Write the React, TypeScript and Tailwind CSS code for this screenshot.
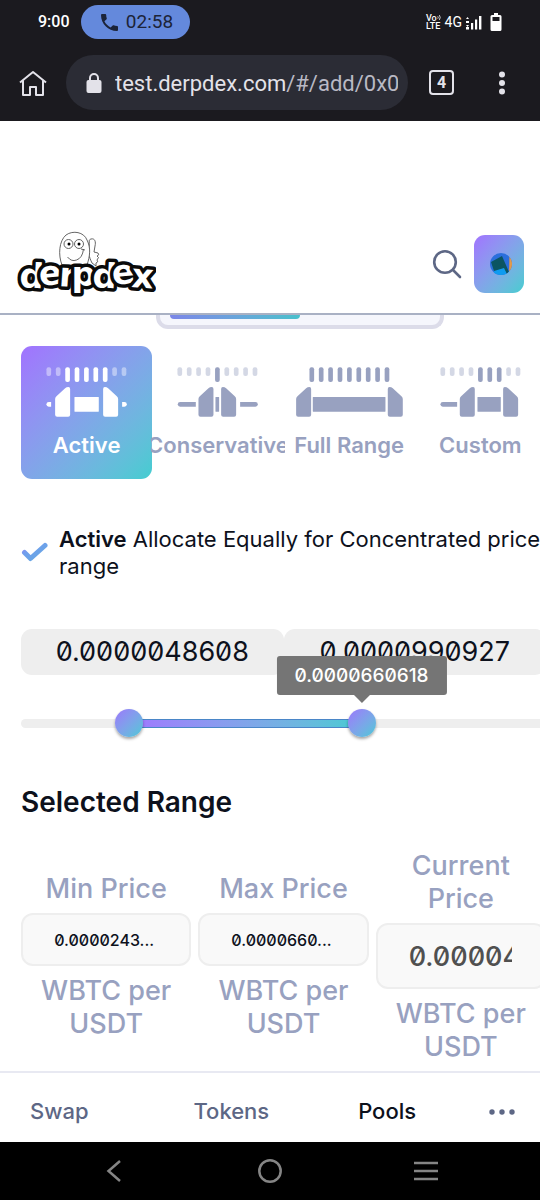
import { useState } from 'react';

type RangeIconProps = {
  tall: number[];
  left: number;
  right: number;
  leftBar?: [number, number];
  rightBar?: [number, number];
  fillBar: [number, number];
};

function RangeIcon({ tall, left, right, leftBar, rightBar, fillBar }: RangeIconProps) {
  return (
    <svg viewBox="0 0 393 150" className="w-full h-[50px]" fill="currentColor" aria-hidden="true">
      {[0, 1, 2, 3, 4, 5, 6, 7, 8].map((i) => {
        const isTall = tall.includes(i);
        return (
          <rect
            key={i}
            x={76 + i * 28.2}
            y={1}
            width={14}
            height={isTall ? 44 : 26}
            rx={6}
            opacity={isTall ? 1 : 0.42}
          />
        );
      })}
      {leftBar && (
        <path d={`M${leftBar[1]} 105H${leftBar[0] + 7}a7 7 0 0 0 0 14H${leftBar[1]}z`} />
      )}
      {rightBar && (
        <path d={`M${rightBar[0]} 105H${rightBar[1] - 7}a7 7 0 0 1 0 14H${rightBar[0]}z`} />
      )}
      <rect x={fillBar[0]} y={90} width={fillBar[1] - fillBar[0]} height={44} rx={1} />
      <path d={`M${left} 96q0-5 4-8l26-24q4-4 10-4q5 0 5 6v77q0 6-6 6h-33q-6 0-6-6z`} />
      <path d={`M${right} 96q0-5-4-8l-26-24q-4-4-10-4q-5 0-5 6v77q0 6 6 6h33q6 0 6-6z`} />
    </svg>
  );
}

const presets: { name: string; icon: RangeIconProps }[] = [
  {
    name: 'Active',
    icon: { tall: [2, 3, 4, 5, 6], left: 102, right: 291, leftBar: [76, 90], rightBar: [303, 317], fillBar: [160, 233] },
  },
  {
    name: 'Conservative',
    icon: { tall: [4], left: 139, right: 252, leftBar: [77, 131], rightBar: [264, 317], fillBar: [190, 201] },
  },
  {
    name: 'Full Range',
    icon: { tall: [0, 1, 2, 3, 4, 5, 6, 7, 8], left: 36, right: 356, fillBar: [86, 304] },
  },
  {
    name: 'Custom',
    icon: { tall: [4, 5, 6], left: 134, right: 309, leftBar: [76, 126], fillBar: [187, 257] },
  },
];

function StatusBar() {
  return (
    <div className="flex h-11 items-center bg-[#1b1a1f] pr-[38px] pl-[38px] font-['Roboto',sans-serif] text-white">
      <span className="text-base font-medium">9:00</span>
      <span className="ml-[11px] flex h-[34px] w-[109px] items-center justify-center gap-2 rounded-full bg-[#6489dc] pl-1 text-[19px] text-[#1c2438]">
        <svg viewBox="3 3 18 18" className="size-[17px]" fill="currentColor" aria-hidden="true">
          <path d="M6.6 10.8c1.4 2.8 3.8 5.1 6.6 6.6l2.2-2.2c.3-.3.7-.4 1-.2 1.1.4 2.3.6 3.6.6.6 0 1 .4 1 1V20c0 .6-.4 1-1 1C10.600 21 3 13.400 3 4c0-.6.4-1 1-1h3.500c.6 0 1 .4 1 1 0 1.300.2 2.500.6 3.600.1.300 0 .7-.2 1z" />
        </svg>
        02:58
      </span>
      <div className="ml-auto flex items-center">
        <span className="flex flex-col items-center text-[9px] leading-[8px] font-medium">
          <span className="flex">
            Vo
            <svg viewBox="0 0 5 8" className="h-[7px] w-1" fill="none" stroke="currentColor" aria-hidden="true">
              <path d="M1 2.500q1 1.500 0 3M3 1q2 3 0 6" />
            </svg>
          </span>
          <span>LTE</span>
        </span>
        <span className="ml-1 text-sm">4G</span>
        <svg viewBox="0 0 16 15" className="ml-1 h-[15px] w-4" fill="currentColor" aria-hidden="true">
          <path d="M0 4l1.500-2L3 4zM0 6h3v2H0zM0 10h3l-1.500 2zM0 12h3v2.500H0zM5 8h2.200v6.500H5zM9 4.500h2.200v10H9zM13 1h2.400v13.500H13z" />
        </svg>
        <svg viewBox="0 0 12 18" className="ml-2 h-[18px] w-3" aria-hidden="true">
          <path d="M4 0h4v2h2q1.500 0 1.500 1.500v13q0 1.500-1.500 1.500H2Q.5 18 .5 16.500v-13Q.5 2 2 2h2z" fill="#fff" />
          <rect x="2.500" y="4" width="7" height="4" fill="#1b1a1f" />
        </svg>
      </div>
    </div>
  );
}

function BrowserBar() {
  return (
    <div className="flex h-[77px] items-center bg-[#1b1a1f] pr-[34px] pl-[18px] font-['Roboto',sans-serif] text-[#e3e2e9]">
      <button type="button" aria-label="Home">
        <svg viewBox="0 0 30 28" className="h-7 w-[30px]" fill="none" stroke="currentColor" strokeWidth="2" aria-hidden="true">
          <path d="M2 13.500L15 3l13 10.500M5 11.500V26h7v-8h6v8h7V11.500" strokeLinejoin="round" />
        </svg>
      </button>
      <button type="button" className="ml-[18px] flex h-[55px] min-w-0 flex-1 items-center rounded-full bg-[#2b2c35] pr-2.5 pl-5 text-left">
        <svg viewBox="0 0 16 20" className="h-5 w-4 shrink-0" aria-hidden="true">
          <rect x="0.500" y="7" width="15" height="13" rx="2" fill="currentColor" />
          <path d="M4 8V5a4 4 0 0 1 8 0v3" fill="none" stroke="currentColor" strokeWidth="2" />
        </svg>
        <span className="ml-[13px] min-w-0 flex-1 overflow-hidden pt-0.5 text-[22px] leading-8 whitespace-nowrap">
          test.derpdex.com<span className="text-[#b9b9c4]">/#/add/0x0</span>
        </span>
      </button>
      <button type="button" aria-label="Tabs" className="ml-[21px] flex size-[25px] items-center justify-center rounded-[4px] border-2 border-[#e3e2e9] text-base leading-5 font-bold">
        4
      </button>
      <button type="button" aria-label="More options" className="ml-11">
        <svg viewBox="0 0 8 24" className="h-6 w-2" fill="currentColor" aria-hidden="true">
          <circle cx="4" cy="3.500" r="3" />
          <circle cx="4" cy="12" r="3" />
          <circle cx="4" cy="20.500" r="3" />
        </svg>
      </button>
    </div>
  );
}

function Logo() {
  return (
    <svg viewBox="0 0 140 70" className="h-[70px] w-[140px]" role="img" aria-label="derpdex">
      <g fill="#fff" stroke="#555" strokeWidth="0.900">
        <path d="M76 34c-3-6-4-11-3-16 1-6-1-7 2-8 4-1 5 3 4 7l-1 6 4 1q2 2-1 3 3 1 0 4 2 2-1 3v3z" />
        <path d="M46 36C42 26 43 12 50 6c7-5 18-3 21 5 4 8 3 16 0 25z" />
        <circle cx="52.500" cy="15" r="4.500" />
        <circle cx="63" cy="15" r="4.500" />
        <path d="M51.500 28q4 5 9 3 6-2 7-11M65 20l4 1" fill="none" />
      </g>
      <circle cx="53" cy="15" r="1.500" />
      <circle cx="63" cy="15" r="1.500" />
      <text
        x="3 24 42.500 55.500 76 97 115"
        y="58 57 57 57 58 56 58"
        rotate="3 -6 4 0 3 -6 4"
        className="font-['DejaVu_Sans',sans-serif] text-[34px] font-bold"
        fill="#fff"
        stroke="#0a0a0a"
        strokeWidth="7"
        strokeLinejoin="round"
        paintOrder="stroke"
      >
        derpdex
      </text>
    </svg>
  );
}

function SiteHeader() {
  return (
    <header className="flex h-[194px] items-end border-b-2 border-[#a9b1c4] pr-4 pb-3.5 pl-4">
      <a href="#/" className="block">
        <Logo />
      </a>
      <button type="button" aria-label="Search" className="mb-5 ml-auto text-[#5d6785]">
        <svg viewBox="0 0 30 30" className="size-[30px]" fill="none" stroke="currentColor" strokeWidth="2.600" strokeLinecap="round" aria-hidden="true">
          <circle cx="13" cy="13" r="10.800" />
          <path d="M21 21l7 7" />
        </svg>
      </button>
      <button
        type="button"
        aria-label="Account"
        className="mb-1.5 ml-3 flex h-[58px] w-[50px] items-center justify-center rounded-[11px] bg-linear-to-br from-[#a172ff] to-[#42cdd0] pl-1"
      >
        <svg viewBox="0 0 22 22" className="size-[22px] rounded-full" aria-hidden="true">
          <rect width="22" height="22" fill="#2b6fdc" />
          <path d="M19.500 0H22v22h-3z" fill="#e39a4b" />
          <path d="M5 16l10-2 2 8H3z" fill="#0e9bf0" />
          <path d="M1 9l11-6 7 16-2 2-3-6-10 3z" fill="#0b5562" />
        </svg>
      </button>
    </header>
  );
}

function PresetTabs({ active, onSelect }: { active: string; onSelect: (name: string) => void }) {
  return (
    <div className="mt-[17px] grid grid-cols-4">
      {presets.map((p) => (
        <button
          key={p.name}
          type="button"
          aria-pressed={p.name === active}
          onClick={() => onSelect(p.name)}
          className={
            p.name === active
              ? 'flex h-[133px] min-w-0 flex-col items-center rounded-[11px] bg-linear-to-br from-[#a172ff] to-[#42cdd0] pt-[21px] text-white'
              : 'flex h-[133px] min-w-0 flex-col items-center pt-[21px] text-[#98a1c0]'
          }
        >
          <RangeIcon {...p.icon} />
          <span className="mt-3.5 flex w-[134px] justify-center overflow-hidden text-[22px] leading-7 font-semibold whitespace-nowrap">
            {p.name}
          </span>
        </button>
      ))}
    </div>
  );
}

const thumbClass =
  "pointer-events-none absolute inset-0 m-0 h-7 w-full appearance-none bg-transparent [&::-webkit-slider-thumb]:pointer-events-auto [&::-webkit-slider-thumb]:size-7 [&::-webkit-slider-thumb]:appearance-none [&::-webkit-slider-thumb]:rounded-full [&::-webkit-slider-thumb]:bg-linear-to-br [&::-webkit-slider-thumb]:from-[#9a76fb] [&::-webkit-slider-thumb]:to-[#45c8d6] [&::-webkit-slider-thumb]:shadow-[0_2px_3px_rgba(0,0,0,0.35)]";

function RangeSlider() {
  const [low, setLow] = useState(189);
  const [high, setHigh] = useState(657);
  return (
    <div className="relative mt-[34px] flex h-7 items-center">
      <div className="h-[9px] w-full rounded-full bg-[#eeeeee] px-3.5">
        <div
          className="h-full border-y border-[#4a86c8] bg-linear-to-r from-[#a076ff] to-[#42cbd2]"
          style={{ marginLeft: `${low / 10}%`, width: `${(high - low) / 10}%` }}
        />
      </div>
      <input
        type="range"
        aria-label="Lower price"
        min={0}
        max={1000}
        value={low}
        onChange={(e) => setLow(Math.min(Number(e.target.value), high))}
        className={thumbClass}
      />
      <input
        type="range"
        aria-label="Upper price"
        min={0}
        max={1000}
        value={high}
        onChange={(e) => setHigh(Math.max(Number(e.target.value), low))}
        className={thumbClass}
      />
      <div className="pointer-events-none absolute inset-x-3.5 bottom-full">
        <div className="absolute bottom-0 -translate-x-1/2" style={{ left: `${high / 10}%` }}>
          <div className="rounded-[3px] bg-[#757575] px-[18px] text-[19px] leading-[39px] font-medium text-white slashed-zero">
            0.0000660618
          </div>
          <svg viewBox="0 0 16 8" className="mx-auto mb-1.5 block h-2 w-4" fill="#757575" aria-hidden="true">
            <path d="M0 0h16L8 8z" />
          </svg>
        </div>
      </div>
    </div>
  );
}

function PriceColumn({ id, label, value, large }: { id: string; label: string; value: string; large?: boolean }) {
  return (
    <div className="flex min-w-0 flex-1 basis-0 flex-col gap-2 text-center text-[27px] leading-[33px] font-medium text-[#98a1c0]">
      <label htmlFor={id} className="mx-auto max-w-36">
        {label}
      </label>
      <div
        className={
          large
            ? 'flex h-[66px] rounded-xl border-2 border-[#eeeeee] bg-[#f9f9f9] pr-8 pl-[31px]'
            : 'flex h-[53px] rounded-xl border-2 border-[#eeeeee] bg-[#f9f9f9] pr-8 pl-7'
        }
      >
        <input
          id={id}
          readOnly
          value={value}
          className={
            large
              ? 'w-full min-w-0 bg-transparent text-[27px] text-[#505050] slashed-zero'
              : 'w-full min-w-0 bg-transparent text-center text-base text-[#0d111c] slashed-zero'
          }
        />
      </div>
      <span className="px-4">WBTC per USDT</span>
    </div>
  );
}

export default function App() {
  const [preset, setPreset] = useState('Active');
  return (
    <div className="flex min-h-screen flex-col overflow-x-hidden bg-white font-['Inter',sans-serif] text-[#0d111c]">
      <StatusBar />
      <BrowserBar />
      <SiteHeader />
      <main className="-mr-1.5 flex-1 pl-[21px]">
        <div className="mr-[102px] ml-[135px] h-3.5 rounded-b-xl border-4 border-t-0 border-[#dcdce9] bg-[#f5f6fc] px-2.5">
          <div className="h-1 w-[130px] rounded-b-lg bg-linear-to-r from-[#7b86e8] to-[#48c0cc]" />
        </div>
        <PresetTabs active={preset} onSelect={setPreset} />
        <div className="mt-[47px] flex items-center gap-2.5">
          <svg viewBox="0 0 28 28" className="size-7 shrink-0" fill="none" stroke="url(#check)" strokeWidth="5" strokeLinecap="round" strokeLinejoin="round" aria-hidden="true">
            <defs>
              <linearGradient id="check" x1="0" y1="0" x2="1" y2="1">
                <stop offset="0" stopColor="#8a8af2" />
                <stop offset="0.350" stopColor="#6ea0ec" />
                <stop offset="1" stopColor="#66a8e0" />
              </linearGradient>
            </defs>
            <path d="M3.500 13.500l6 6L24 6.500" />
          </svg>
          <p className="text-[22px] leading-[27px]">
            <strong className="font-semibold">Active</strong> Allocate Equally for Concentrated price range
          </p>
        </div>
        <div className="mt-[49px] flex h-[46px] text-center text-[27px] leading-[46px] slashed-zero">
          <div className="flex-1 rounded-[11px] bg-[#eeeeee]">0.0000048608</div>
          <div className="flex-1 rounded-[11px] bg-[#eeeeee]">0.0000990927</div>
        </div>
        <RangeSlider />
        <h2 className="mt-[49px] text-[28px] leading-8 font-semibold">Selected Range</h2>
        <div className="mt-[31px] flex items-center gap-[7px]">
          <PriceColumn id="min-price" label="Min Price" value="0.0000243..." />
          <PriceColumn id="max-price" label="Max Price" value="0.0000660..." />
          <PriceColumn id="current-price" label="Current Price" value="0.00004" large />
        </div>
      </main>
      <nav className="flex h-[71px] items-center justify-between border-t-2 border-[#e8e9f2] pt-2 pr-[25px] pl-[30px] text-[22px] font-medium text-[#5d6785]">
        <a href="#/swap">Swap</a>
        <a href="#/tokens" className="ml-8">Tokens</a>
        <a href="#/pools" className="ml-4 text-[#0d111c]">Pools</a>
        <button type="button" aria-label="More">
          <svg viewBox="0 0 26 6" className="h-1.5 w-[26px]" fill="currentColor" aria-hidden="true">
            <circle cx="3" cy="3" r="2.700" />
            <circle cx="13" cy="3" r="2.700" />
            <circle cx="23" cy="3" r="2.700" />
          </svg>
        </button>
      </nav>
      <div className="grid h-[58px] grid-cols-3 items-center justify-items-center bg-black px-9 text-[#858585]">
        <button type="button" aria-label="Back">
          <svg viewBox="0 0 18 24" className="h-6 w-[18px]" fill="none" stroke="currentColor" strokeWidth="2.500" aria-hidden="true">
            <path d="M15 2L3.500 12 15 22" />
          </svg>
        </button>
        <button type="button" aria-label="Home screen">
          <svg viewBox="0 0 26 26" className="size-[26px]" fill="none" stroke="currentColor" strokeWidth="2.500" aria-hidden="true">
            <circle cx="13" cy="13" r="10.700" />
          </svg>
        </button>
        <button type="button" aria-label="Recent apps">
          <svg viewBox="0 0 26 24" className="h-6 w-[26px]" fill="none" stroke="currentColor" strokeWidth="2.600" aria-hidden="true">
            <path d="M1 4h24M1 12h24M1 20h24" />
          </svg>
        </button>
      </div>
    </div>
  );
}
